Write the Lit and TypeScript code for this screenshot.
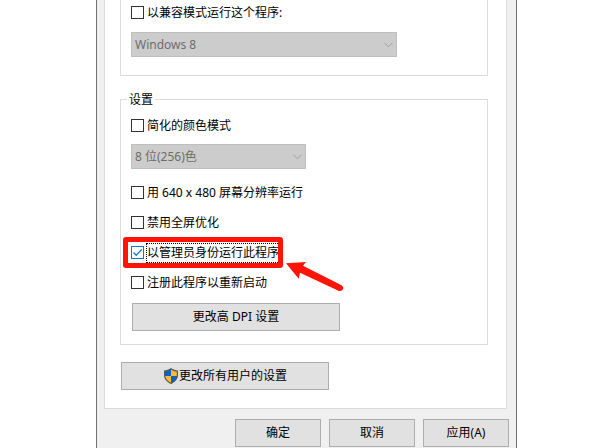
import { LitElement, html, css } from "lit";
import { customElement } from "lit/decorators.js";

@customElement("app-root")
export class AppRoot extends LitElement {
  static styles = css`
    :host {
      display: block;
      min-height: 100vh;
      overflow: hidden;
      background: #fff;
      color: #000;
      font: 12px/16px "Noto Sans", "Noto Sans CJK SC", sans-serif;
    }
    * {
      box-sizing: border-box;
    }
    .dialog {
      display: flex;
      flex-direction: column;
      min-height: 100vh;
      margin: 0 83px 0 96px;
      padding: 0 7px;
      border: 1px solid #6f7072;
      border-width: 0 1px;
      background: #f0f0f0;
    }
    .panel {
      padding: 0 18px 18px 15px;
      margin-right: 2px;
      border: 1px solid #dcdcdc;
      border-top: 0;
      background: #fff;
    }
    .group {
      position: relative;
      display: flex;
      flex-direction: column;
      align-items: flex-start;
      min-width: 0;
      margin: 0;
      padding: 0 10px 13px;
      border: 1px solid #dcdcdc;
    }
    .compat {
      padding-top: 4px;
      padding-bottom: 18px;
      border-top: 0;
    }
    .settings {
      margin-top: 23px;
      padding-top: 17px;
    }
    .legend {
      position: absolute;
      top: -8px;
      left: 6px;
      padding: 0 2px;
      background: #fff;
    }
    .check {
      display: grid;
      grid-template-columns: 13px auto;
      align-items: center;
      column-gap: 2px;
      height: 17px;
    }
    .box {
      grid-area: 1 / 1;
      appearance: none;
      width: 13px;
      height: 13px;
      margin: 0;
      border: 1px solid #333;
      background: #fff;
    }
    .box:checked {
      border-color: #0078d7;
    }
    .tick {
      grid-area: 1 / 1;
      width: 13px;
      height: 13px;
      pointer-events: none;
    }
    .text {
      padding: 0 1px;
      white-space: nowrap;
    }
    .focused {
      margin: -2px 0;
      padding: 2px 1px;
      outline: 1px dotted #000;
      outline-offset: -1px;
    }
    .combo {
      display: grid;
      align-items: center;
      width: 175px;
      margin: 10px 0 15px;
    }
    .wide {
      width: 266px;
      max-width: 100%;
      margin: 11px 0 0;
    }
    .select {
      grid-area: 1 / 1;
      appearance: none;
      width: 100%;
      height: 25px;
      padding: 0 20px 0 3px;
      border: 1px solid #bfbfbf;
      border-radius: 0;
      background: #ccc;
      color: #6d6d6d;
      opacity: 1;
      font: inherit;
    }
    .chevron {
      grid-area: 1 / 1;
      justify-self: end;
      width: 9px;
      height: 6px;
      margin-right: 4px;
      pointer-events: none;
    }
    .options {
      display: flex;
      flex-direction: column;
      align-items: flex-start;
      gap: 13px;
    }
    .marked {
      position: relative;
    }
    .frame {
      position: absolute;
      inset: -7px -3px -7px -8px;
      border: 5px solid #fd1407;
      border-radius: 3px;
      pointer-events: none;
    }
    .arrow {
      position: absolute;
      top: 16px;
      left: 100%;
      width: 60px;
      height: 34px;
      margin-left: 6px;
      pointer-events: none;
    }
    .button {
      display: flex;
      align-items: center;
      justify-content: center;
      height: 28px;
      padding: 0;
      border: 1px solid #adadad;
      border-radius: 0;
      background: #e1e1e1;
      color: #000;
      font: inherit;
    }
    .long {
      width: 208px;
    }
    .dpi {
      margin: 12px 0 0 1px;
    }
    .all {
      margin: 17px 0 0 1px;
    }
    .shield {
      width: 16px;
      height: 16px;
    }
    .actions {
      display: flex;
      justify-content: flex-end;
      gap: 8px;
      padding-top: 10px;
    }
    .short {
      width: 86px;
    }
  `;

  private option(text: string) {
    return html`<label class="check">
      <input class="box" type="checkbox" /><span class="text">${text}</span>
    </label>`;
  }

  private combo(name: string, value: string, extra = "") {
    return html`<div class="combo ${extra}">
      <select class="select" aria-label=${name} disabled>
        <option>${value}</option>
      </select>
      <svg class="chevron" viewBox="0 0 9 6" aria-hidden="true">
        <path d="M.5 .8 4.5 4.8 8.5 .8" fill="none" stroke="#a0a0a0" />
      </svg>
    </div>`;
  }

  render() {
    return html`<main class="dialog">
      <section class="panel">
        <div class="group compat" role="group" aria-label="兼容模式">
          ${this.option("以兼容模式运行这个程序:")}
          ${this.combo("兼容模式", "Windows 8", "wide")}
        </div>
        <div class="group settings" role="group" aria-labelledby="settings">
          <span class="legend" id="settings">设置</span>
          ${this.option("简化的颜色模式")}
          ${this.combo("颜色模式", "8 位(256)色")}
          <div class="options">
            ${this.option("用 640 x 480 屏幕分辨率运行")}
            ${this.option("禁用全屏优化")}
            <div class="marked">
              <label class="check">
                <input class="box" type="checkbox" checked />
                <svg class="tick" viewBox="0 0 13 13" aria-hidden="true">
                  <path d="M2.5 6.5 5.2 9.2 10.8 3.4" fill="none" stroke="#0078d7" stroke-width="1.3" />
                </svg>
                <span class="text focused">以管理员身份运行此程序</span>
              </label>
              <div class="frame"></div>
              <svg class="arrow" viewBox="0 0 60 34" aria-hidden="true">
                <path d="M0 3.300 20 2 17 5.800 55.500 25.200Q58 27 57 29.300 56 31.500 53 31L14 12.800 12.700 18.700Z" fill="#fd1407" />
              </svg>
            </div>
            ${this.option("注册此程序以重新启动")}
          </div>
          <button class="button long dpi" type="button">更改高 DPI 设置</button>
        </div>
        <button class="button long all" type="button">
          <svg class="shield" viewBox="0 0 16 16" aria-hidden="true">
            <path d="M8 0C6 1.600 3.600 2.400 1 2.500V7c0 4 2.600 7 7 9 4.400-2 7-5 7-9V2.500C12.400 2.400 10 1.600 8 0Z" fill="#555" />
            <path d="M8 1.500C6.300 2.800 4.300 3.500 2.200 3.600V8H8Z" fill="#0b63c4" />
            <path d="M8 1.500C9.700 2.800 11.700 3.500 13.800 3.600V8H8Z" fill="#fdb932" />
            <path d="M2.200 8C2.600 11 4.700 13.200 8 14.700V8Z" fill="#fdb932" />
            <path d="M13.800 8C13.400 11 11.300 13.200 8 14.700V8Z" fill="#0b63c4" />
          </svg>
          更改所有用户的设置
        </button>
      </section>
      <footer class="actions">
        <button class="button short" type="button">确定</button>
        <button class="button short" type="button">取消</button>
        <button class="button short" type="button">应用(A)</button>
      </footer>
    </main>`;
  }
}
